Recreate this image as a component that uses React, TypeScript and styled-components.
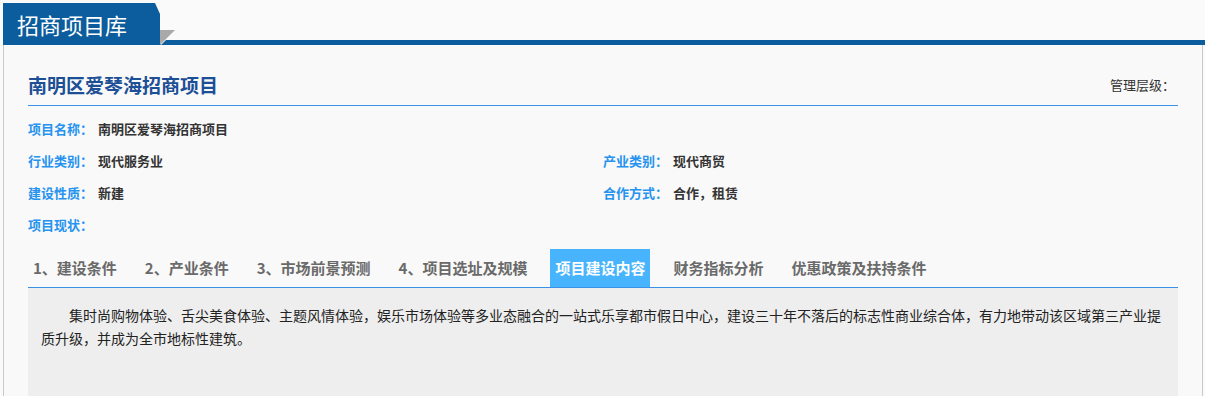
import React from "react";
import styled, { createGlobalStyle } from "styled-components";

const GlobalStyle = createGlobalStyle`
  html, body { margin: 0; padding: 0; background: #fafafa; }
  body { font-family: "Noto Sans CJK SC", "Noto Sans", sans-serif; }
  * { box-sizing: border-box; }
`;

const Page = styled.div`
  padding: 3px 0 0 3px;
  height: 396px;
  overflow: hidden;
`;

const HeaderRow = styled.div`
  display: flex;
  height: 42px;
`;

const HeaderTab = styled.div`
  width: 157px;
  height: 42px;
  background: #0c5d9d;
  color: #fff;
  font-size: 22px;
  line-height: 42px;
  padding-left: 14px;
  clip-path: polygon(0 0, 152px 0, 100% 11px, 100% 100%, 0 100%);
`;

const HeaderRest = styled.div`
  flex: 1;
  position: relative;
  border-bottom: 5px solid #0c5d9d;
  &::before {
    content: "";
    position: absolute;
    left: 0;
    bottom: -5px;
    width: 0;
    height: 0;
    border-top: 15px solid #a9a9a9;
    border-right: 15px solid transparent;
    filter: drop-shadow(1px 0 0 #fafafa);
  }
`;

const Panel = styled.div`
  margin-right: 2px;
  background: #f9f9f9;
  border-left: 1px solid #c9c9c9;
  border-right: 1px solid #c9c9c9;
  padding: 0 24px;
  min-height: 360px;
`;

const TitleRow = styled.div`
  display: flex;
  align-items: center;
  justify-content: space-between;
  height: 61px;
  padding: 18px 3px 0 0;
  border-bottom: 1px solid #3a92e8;
`;

const Title = styled.h1`
  margin: 0;
  font-size: 19px;
  font-weight: bold;
  color: #1c4f96;
`;

const Level = styled.span`
  font-size: 13px;
  color: #333;
`;

const InfoGrid = styled.div`
  display: grid;
  grid-template-columns: 575px 1fr;
  grid-auto-rows: 32px;
  margin-top: 6px;
`;

const InfoItem = styled.div<{ $full?: boolean }>`
  display: flex;
  align-items: center;
  font-size: 13px;
  font-weight: bold;
  grid-column: ${(p) => (p.$full ? "1 / -1" : "auto")};
`;

const Label = styled.span`
  color: #2593ef;
  margin-right: 5px;
`;

const Value = styled.span`
  color: #333;
`;

const TabBar = styled.div`
  display: flex;
  gap: 18px;
  margin-top: 9px;
  border-bottom: 1px solid #3a92e8;
`;

const Tab = styled.div<{ $active?: boolean }>`
  height: 38px;
  line-height: 38px;
  padding: 0 5px;
  font-size: 15px;
  font-weight: bold;
  color: ${(p) => (p.$active ? "#fff" : "#6a6a6a")};
  background: ${(p) => (p.$active ? "#47b4fd" : "transparent")};
`;

const Content = styled.div`
  background: #eeeeee;
  padding: 16px 13px 0 13px;
  min-height: 200px;
`;

const Paragraph = styled.p`
  margin: 0;
  font-size: 14px;
  line-height: 23px;
  text-indent: 28px;
  color: #222;
`;

const tabs = [
  "1、建设条件",
  "2、产业条件",
  "3、市场前景预测",
  "4、项目选址及规模",
  "项目建设内容",
  "财务指标分析",
  "优惠政策及扶持条件",
];

export default function App() {
  return (
    <>
      <GlobalStyle />
      <Page>
        <HeaderRow>
          <HeaderTab>招商项目库</HeaderTab>
          <HeaderRest />
        </HeaderRow>
        <Panel>
          <TitleRow>
            <Title>南明区爱琴海招商项目</Title>
            <Level>管理层级：</Level>
          </TitleRow>
          <InfoGrid>
            <InfoItem $full>
              <Label>项目名称：</Label>
              <Value>南明区爱琴海招商项目</Value>
            </InfoItem>
            <InfoItem>
              <Label>行业类别：</Label>
              <Value>现代服务业</Value>
            </InfoItem>
            <InfoItem>
              <Label>产业类别：</Label>
              <Value>现代商贸</Value>
            </InfoItem>
            <InfoItem>
              <Label>建设性质：</Label>
              <Value>新建</Value>
            </InfoItem>
            <InfoItem>
              <Label>合作方式：</Label>
              <Value>合作，租赁</Value>
            </InfoItem>
            <InfoItem $full>
              <Label>项目现状：</Label>
            </InfoItem>
          </InfoGrid>
          <TabBar>
            {tabs.map((t) => (
              <Tab key={t} $active={t === "项目建设内容"}>
                {t}
              </Tab>
            ))}
          </TabBar>
          <Content>
            <Paragraph>
              集时尚购物体验、舌尖美食体验、主题风情体验，娱乐市场体验等多业态融合的一站式乐享都市假日中心，建设三十年不落后的标志性商业综合体，有力地带动该区域第三产业提质升级，并成为全市地标性建筑。
            </Paragraph>
          </Content>
        </Panel>
      </Page>
    </>
  );
}
